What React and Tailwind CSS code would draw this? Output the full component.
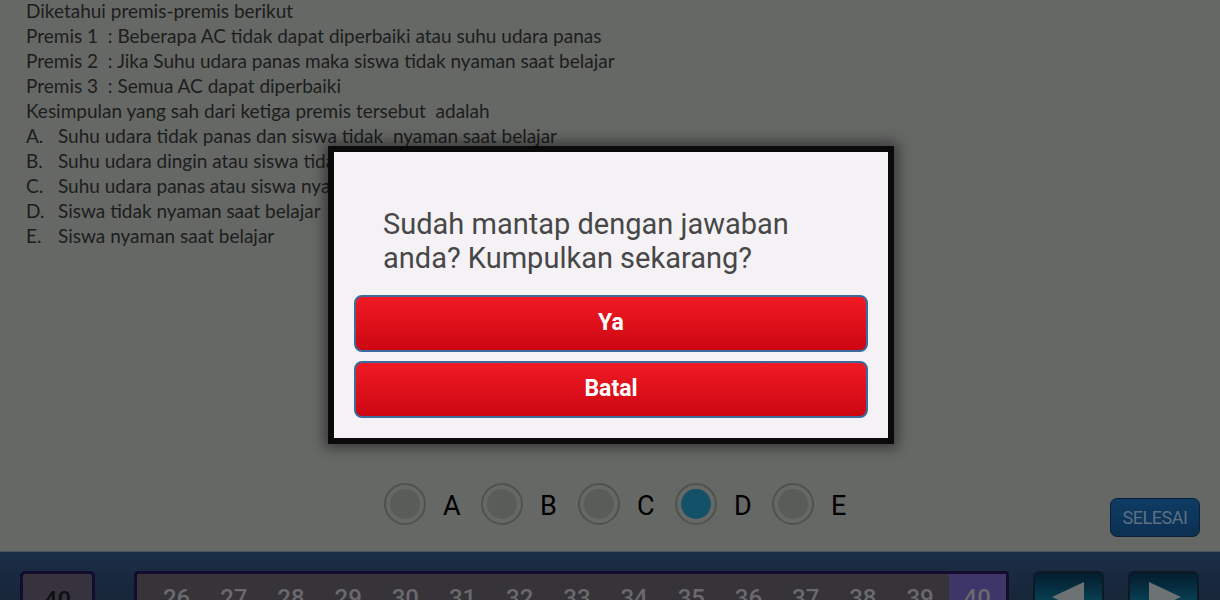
import React from 'react';

const lines = [
  { label: null, text: 'Diketahui premis-premis berikut' },
  { label: null, text: 'Premis 1  : Beberapa AC tidak dapat diperbaiki atau suhu udara panas' },
  { label: null, text: 'Premis 2  : Jika Suhu udara panas maka siswa tidak nyaman saat belajar' },
  { label: null, text: 'Premis 3  : Semua AC dapat diperbaiki' },
  { label: null, text: 'Kesimpulan yang sah dari ketiga premis tersebut  adalah' },
  { label: 'A.', text: 'Suhu udara tidak panas dan siswa tidak  nyaman saat belajar' },
  { label: 'B.', text: 'Suhu udara dingin atau siswa tidak nyaman saat belajar' },
  { label: 'C.', text: 'Suhu udara panas atau siswa nyaman saat belajar' },
  { label: 'D.', text: 'Siswa tidak nyaman saat belajar' },
  { label: 'E.', text: 'Siswa nyaman saat belajar' },
];

const options = ['A', 'B', 'C', 'D', 'E'];
const numbers = [26, 27, 28, 29, 30, 31, 32, 33, 34, 35, 36, 37, 38, 39, 40];

function Radio({ letter, checked }) {
  return (
    <div className="flex items-center gap-[17px]">
      <div className="w-[42px] h-[42px] rounded-full border-2 border-[#4f524f] flex items-center justify-center">
        <div className={`w-[30px] h-[30px] rounded-full ${checked ? 'bg-[#135169]' : 'bg-[#5a5c5a]'}`} />
      </div>
      <span className="w-[38px] text-[27px] text-black leading-none pt-[4px]">{letter}</span>
    </div>
  );
}

export default function App() {
  return (
    <div className="w-[1220px] h-[600px] overflow-hidden flex flex-col bg-[#666866] relative" style={{ fontFamily: 'Roboto, sans-serif' }}>
      {/* Question */}
      <div className="flex-1 flex flex-col">
        <div className="pl-[26px] -mt-[2px] text-[19px] leading-[25px] text-[#1c1d1c]" style={{ fontFamily: 'Lato, sans-serif' }}>
          {lines.map((l, i) => (
            <div key={i} className="flex whitespace-pre">
              {l.label && <span className="w-[32px]">{l.label}</span>}
              <span>{l.text}</span>
            </div>
          ))}
        </div>

        <div className="flex items-start mt-auto mb-[14px]">
          <div className="flex items-center ml-[384px] mb-[12px]">
            {options.map((o) => (
              <Radio key={o} letter={o} checked={o === 'D'} />
            ))}
          </div>
          <button className="ml-auto mr-[20px] mt-[15px] w-[90px] h-[39px] rounded-[7px] bg-gradient-to-b from-[#0e3c64] to-[#0b3052] border border-[#0a2238] text-[#5d7082] text-[18px] tracking-tight">
            SELESAI
          </button>
        </div>
      </div>

      {/* Bottom bar */}
      <div className="h-[49px] shrink-0 border-t border-[#4a5460] bg-gradient-to-b from-[#1b2e47] to-[#172538] flex items-start pt-[19px] px-[20px]">
        <div className="w-[75px] h-[40px] rounded-[5px] border-[3px] border-[#130c2e] bg-[#36333c] flex justify-center pt-[8px] text-[24px] text-[#0e0e14] font-medium">
          40
        </div>
        <div className="ml-[39px] w-[875px] h-[40px] rounded-[4px] border-[3px] border-[#130c2e] bg-[#363339] flex items-start overflow-hidden pl-[11px]">
          {numbers.map((n) => (
            <div
              key={n}
              className={`w-[57.2px] shrink-0 h-full flex justify-center pt-[6px] text-[24px] text-[#6a6a6c] font-medium ${n === 40 ? 'bg-[#3e3668]' : ''}`}
            >
              {n}
            </div>
          ))}
        </div>
        <div className="ml-[24px] w-[71px] h-[40px] rounded-[6px] border-2 border-[#0b1a26] bg-gradient-to-b from-[#031c2c] to-[#0b4a60] flex justify-center pt-[9px]">
          <svg width="34" height="30" viewBox="0 0 34 30"><polygon points="0,15 32,0 32,30" fill="#6d7272" /></svg>
        </div>
        <div className="ml-[24px] w-[71px] h-[40px] rounded-[6px] border-2 border-[#0b1a26] bg-gradient-to-b from-[#031c2c] to-[#0b4a60] flex justify-center pt-[9px]">
          <svg width="34" height="30" viewBox="0 0 34 30"><polygon points="34,15 2,0 2,30" fill="#6d7272" /></svg>
        </div>
      </div>

      {/* Confirmation dialog */}
      <div className="absolute left-[328px] top-[146px] w-[566px] h-[298px] bg-[#0a0a0a] p-[6px] shadow-[0_0_12px_4px_rgba(0,0,0,0.45)]">
        <div className="w-full h-full bg-[#f5f2f6] flex flex-col px-[20px] pt-[55px]">
          <p className="pl-[29px] text-[29px] leading-[34px] text-[#474747]">
            Sudah mantap dengan jawaban<br />anda? Kumpulkan sekarang?
          </p>
          <button className="mt-[20px] h-[57px] rounded-[8px] border-2 border-[#3d6b9e] bg-gradient-to-b from-[#f01a24] to-[#cc0612] text-white text-[23px] font-bold">
            Ya
          </button>
          <button className="mt-[9px] h-[57px] rounded-[8px] border-2 border-[#3d6b9e] bg-gradient-to-b from-[#f01a24] to-[#cc0612] text-white text-[23px] font-bold">
            Batal
          </button>
        </div>
      </div>
    </div>
  );
}
